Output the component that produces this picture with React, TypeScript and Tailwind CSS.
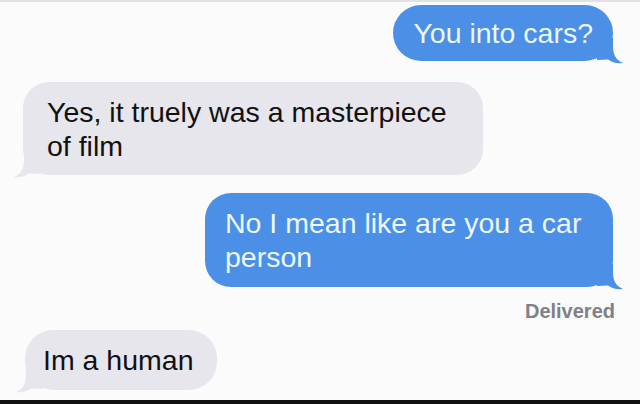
import React from "react";

const BLUE = "#4b8fe6";
const GRAY = "#e8e6ed";

function TailRight({ color }: { color: string }) {
  return (
    <svg
      className="absolute right-[-10px] bottom-[-3px]"
      width="26"
      height="26"
      viewBox="0 0 26 26"
    >
      <path
        d="M0 0 L16 0 L16 8 C16 17 19 22 26 25 C20 25.8 15 24.4 11 21.5 L0 22 Z"
        fill={color}
      />
    </svg>
  );
}

function TailLeft({ color }: { color: string }) {
  return (
    <svg
      className="absolute left-[-9px] bottom-[-3px]"
      width="26"
      height="26"
      viewBox="0 0 26 26"
    >
      <path
        d="M26 0 L10 0 L10 8 C10 17 7 22 0 25 C6 25.8 11 24.4 15 21.5 L26 22 Z"
        fill={color}
      />
    </svg>
  );
}

export default function App() {
  return (
    <div
      className="w-[640px] h-[404px] overflow-hidden bg-[#fbfbfb] flex flex-col relative"
      style={{ fontFamily: '"Liberation Sans", Arial, sans-serif' }}
    >
      <div className="h-[2px] bg-[#e2e2e2] w-full" />

      {/* Bubble 1 */}
      <div className="flex justify-end pr-[27px] mt-[3px]">
        <div
          className="relative rounded-[28px] pl-[20px] pr-[20px] pt-[11px] pb-[11px] text-[28.5px] leading-[34px] text-[#ecf8ff]"
          style={{ backgroundColor: BLUE }}
        >
          <TailRight color={BLUE} />
          <span className="relative">You into cars?</span>
        </div>
      </div>

      {/* Bubble 2 */}
      <div className="flex justify-start pl-[23px] mt-[21px]">
        <div
          className="relative w-[460px] rounded-[26px] pl-[24px] pr-[20px] pt-[13px] pb-[12px] text-[28.5px] leading-[34px] text-[#111111]"
          style={{ backgroundColor: GRAY }}
        >
          <TailLeft color={GRAY} />
          <span className="relative">
            Yes, it truely was a masterpiece of film
          </span>
        </div>
      </div>

      {/* Bubble 3 */}
      <div className="flex justify-end pr-[27px] mt-[18px]">
        <div
          className="relative w-[408px] rounded-[26px] pl-[20px] pr-[18px] pt-[13px] pb-[13px] text-[28.5px] leading-[34px] text-[#ecf8ff]"
          style={{ backgroundColor: BLUE }}
        >
          <TailRight color={BLUE} />
          <span className="relative">No I mean like are you a car person</span>
        </div>
      </div>

      {/* Delivered */}
      <div className="flex justify-end pr-[25px] mt-[12px]">
        <span className="text-[20px] leading-[24px] text-[#808085] font-semibold">
          Delivered
        </span>
      </div>

      {/* Bubble 4 */}
      <div className="flex justify-start pl-[25px] mt-[7px]">
        <div
          className="relative rounded-[28px] pl-[18px] pr-[23px] pt-[13px] pb-[13px] text-[28.5px] leading-[34px] text-[#111111]"
          style={{ backgroundColor: GRAY }}
        >
          <TailLeft color={GRAY} />
          <span className="relative">Im a human</span>
        </div>
      </div>

      <div className="absolute left-0 right-0 bottom-0 h-[4px] bg-[#111111]" />
    </div>
  );
}
